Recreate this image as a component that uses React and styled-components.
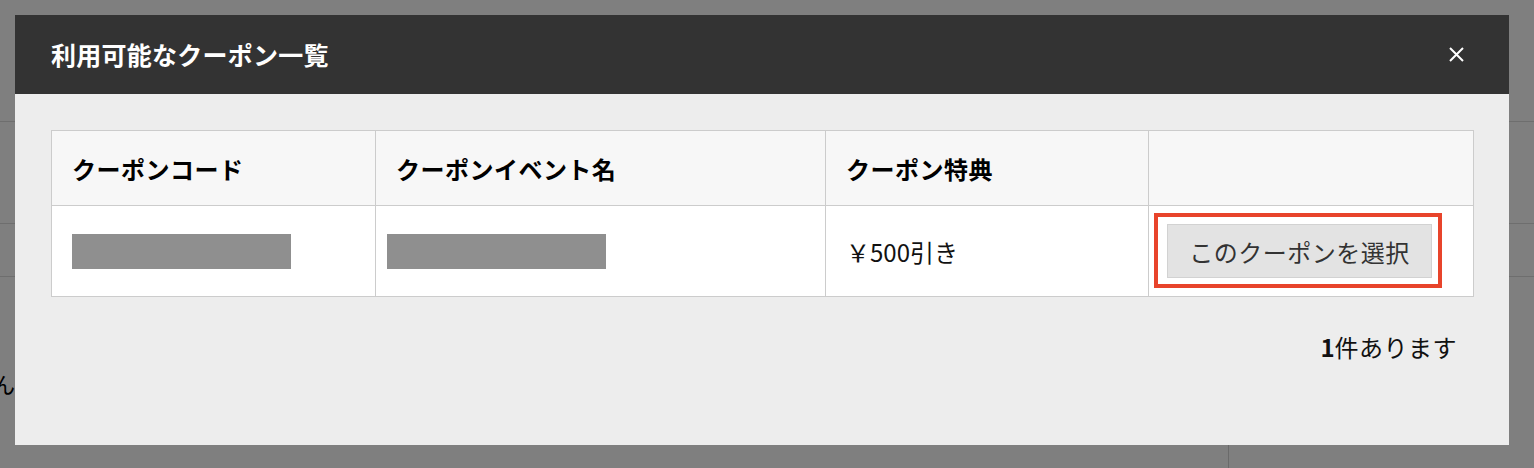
import React from "react";
import styled, { createGlobalStyle } from "styled-components";

const GlobalStyle = createGlobalStyle`
  html, body {
    margin: 0;
    padding: 0;
    background: #ffffff;
    font-family: "Noto Sans CJK JP", "Noto Sans", sans-serif;
    color: #111;
  }
  * { box-sizing: border-box; }
`;

/* ---------- background page (under the overlay) ---------- */
const Page = styled.div`
  width: 1534px;
  height: 468px;
  display: flex;
  flex-direction: column;
  overflow: hidden;
`;

const PageRow = styled.div`
  height: ${(p) => p.$h}px;
  border-bottom: 1px solid #dcdcdc;
  flex: none;
`;

const NoteRow = styled.div`
  height: 167px;
  display: flex;
  align-items: center;
  flex: none;
  padding-top: 45px;
`;

const LeftNote = styled.div`
  width: 15px;
  overflow: hidden;
  display: flex;
  justify-content: flex-end;
  white-space: nowrap;
  font-size: 22px;
  color: #000;
`;

const PageFooter = styled.div`
  flex: 1;
  display: grid;
  grid-template-columns: 1229px 1fr;
`;

const FooterCol = styled.div`
  border-right: ${(p) => (p.$divider ? "1px solid #d4d4d4" : "none")};
`;

/* ---------- overlay + modal ---------- */
const Overlay = styled.div`
  position: fixed;
  inset: 0;
  background: rgba(0, 0, 0, 0.5);
  padding: 15px 25px 0 15px;
`;

const Modal = styled.div`
  width: 1494px;
  height: 430px;
  background: #ededed;
  display: flex;
  flex-direction: column;
`;

const Header = styled.div`
  height: 79px;
  flex: none;
  background: #333333;
  display: flex;
  align-items: center;
  justify-content: space-between;
  padding: 0 45px 0 36px;
`;

const Title = styled.h2`
  margin: 0;
  color: #ffffff;
  font-size: 25px;
  font-weight: 700;
  letter-spacing: 0.01em;
  line-height: 1;
`;

const CloseButton = styled.button`
  width: 15px;
  height: 15px;
  padding: 0;
  border: none;
  background: transparent;
  cursor: pointer;
  display: flex;
  align-items: center;
  justify-content: center;
`;

const Body = styled.div`
  padding: 36px 36px 0 36px;
  display: flex;
  flex-direction: column;
`;

const Table = styled.table`
  width: 1422px;
  border-collapse: collapse;
  table-layout: fixed;
  background: #ffffff;
`;

const HeadCell = styled.th`
  height: 75px;
  padding: 0 20px;
  background: #f7f7f7;
  border: 1px solid #cccccc;
  text-align: left;
  font-size: 24px;
  font-weight: 700;
  letter-spacing: 0.02em;
  color: #000;
`;

const Cell = styled.td`
  height: 91px;
  padding: 0 ${(p) => (p.$tight ? 18 : 20)}px;
  border: 1px solid #cccccc;
  background: #ffffff;
  font-size: 24px;
  letter-spacing: 0;
  color: #111;
  vertical-align: middle;
`;

const Redacted = styled.div`
  width: 219px;
  height: 35px;
  background: #8f8f8f;
  margin-left: ${(p) => p.$shift || 0}px;
`;

const SelectButton = styled.button`
  position: relative;
  width: 265px;
  height: 54px;
  background: #e3e3e3;
  border: 1px solid #d2d2d2;
  border-radius: 0;
  color: #333;
  font-family: inherit;
  font-size: 24px;
  letter-spacing: 0.02em;
  padding: 0;
  cursor: pointer;

  &::after {
    content: "";
    position: absolute;
    top: -12px;
    left: -14px;
    right: -11px;
    bottom: -11px;
    border: 4px solid #e8442b;
    pointer-events: none;
  }
`;

const Count = styled.p`
  margin: 32px 16px 0 0;
  text-align: right;
  font-size: 24px;
  line-height: 36px;
  letter-spacing: 0.02em;
  color: #111;

  strong {
    font-weight: 700;
    letter-spacing: 0;
  }
`;

const headers = ["クーポンコード", "クーポンイベント名", "クーポン特典", ""];
const widths = [324, 450, 323, 325];

export default function App() {
  return (
    <>
      <GlobalStyle />
      <Page>
        <PageRow $h={122} />
        <PageRow $h={102} />
        <PageRow $h={53} />
        <NoteRow>
          <LeftNote>ありません</LeftNote>
        </NoteRow>
        <PageFooter>
          <FooterCol $divider />
          <FooterCol />
        </PageFooter>
      </Page>
      <Overlay>
        <Modal role="dialog" aria-label="利用可能なクーポン一覧">
          <Header>
            <Title>利用可能なクーポン一覧</Title>
            <CloseButton aria-label="閉じる">
              <svg width="15" height="15" viewBox="0 0 15 15">
                <path
                  d="M1 1 L14 14 M14 1 L1 14"
                  stroke="#ffffff"
                  strokeWidth="2"
                  fill="none"
                />
              </svg>
            </CloseButton>
          </Header>
          <Body>
            <Table>
              <colgroup>
                {widths.map((w, i) => (
                  <col key={i} style={{ width: w }} />
                ))}
              </colgroup>
              <thead>
                <tr>
                  {headers.map((h, i) => (
                    <HeadCell key={i}>{h}</HeadCell>
                  ))}
                </tr>
              </thead>
              <tbody>
                <tr>
                  <Cell>
                    <Redacted />
                  </Cell>
                  <Cell>
                    <Redacted $shift={-9} />
                  </Cell>
                  <Cell>￥500引き</Cell>
                  <Cell $tight>
                    <SelectButton>このクーポンを選択</SelectButton>
                  </Cell>
                </tr>
              </tbody>
            </Table>
            <Count>
              <strong>1</strong>件あります
            </Count>
          </Body>
        </Modal>
      </Overlay>
    </>
  );
}
